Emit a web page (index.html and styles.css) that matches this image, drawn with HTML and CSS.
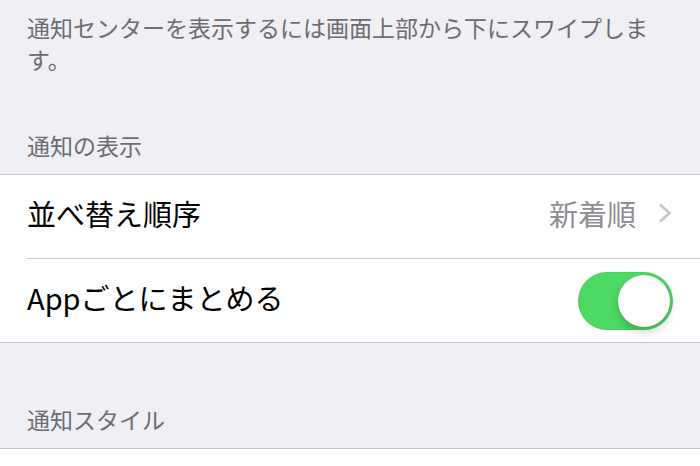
FILE: index.html
```html
<!DOCTYPE html>
<html lang="ja">
<head>
    <meta charset="UTF-8">
    <meta name="viewport" content="width=device-width, initial-scale=1.0">
    <title>通知</title>
    <link rel="stylesheet" href="styles.css">
</head>
<body>

<p class="note">通知センターを表示するには画面上部から下にスワイプします。</p>

<div class="sectionHeader">通知の表示</div>
<div class="group">
    <div class="row">
        <span class="rowLabel">並べ替え順序</span>
        <span class="rowValue">新着順</span>
        <svg class="chevron" width="16" height="20" viewBox="0 0 16 20">
            <path d="M3 1.5 L12.5 10 L3 18.5" fill="none" stroke="#c7c7cc" stroke-width="2.8"/>
        </svg>
    </div>
    <div class="row">
        <span class="rowLabel">Appごとにまとめる</span>
        <div class="toggle on"><div class="knob"></div></div>
    </div>
</div>

<div class="sectionHeader second">通知スタイル</div>
<div class="group">
    <div class="row appRow">
        <div class="appIcon"></div>
    </div>
</div>

</body>
</html>
```

FILE: styles.css
```css
body {
    margin: 0;
    background-color: #efeff4;
    font-family: "Noto Sans CJK JP", "Noto Sans", sans-serif;
}
.note {
    margin: 0;
    padding: 11px 27px 0 27px;
    font-size: 23px;
    line-height: 32px;
    color: #6d6d72;
}
.sectionHeader {
    padding: 0 27px 13px 27px;
    margin-top: 54px;
    font-size: 23px;
    line-height: 32px;
    color: #6d6d72;
}
.sectionHeader.second {
    margin-top: 60px;
}
.group {
    background-color: white;
    border-top: 1px solid #c8c7cc;
    border-bottom: 1px solid #c8c7cc;
}
.row {
    display: flex;
    align-items: center;
    height: 83px;
    margin-left: 27px;
    padding-right: 27px;
    border-bottom: 1px solid #c8c7cc;
}
.row:last-child {
    border-bottom: none;
}
.rowLabel {
    flex: 1;
    font-size: 29px;
    color: black;
    padding-bottom: 8px;
}
.rowValue {
    font-size: 29px;
    color: #8e8e93;
    margin-right: 21px;
    padding-bottom: 8px;
}
.chevron {
    display: block;
    margin-bottom: 8px;
}
.toggle {
    position: relative;
    width: 95px;
    height: 58px;
    border-radius: 29px;
    background-color: #4cd964;
    box-shadow: inset 0 0 0 1px rgba(0, 0, 0, 0.04);
}
.knob {
    position: absolute;
    top: 3px;
    right: 3px;
    width: 52px;
    height: 52px;
    border-radius: 50%;
    background-color: white;
    box-shadow: 0 5px 8px rgba(0, 0, 0, 0.18), 0 0 1px rgba(0, 0, 0, 0.25);
}
.appRow {
    align-items: flex-start;
    padding-top: 17px;
}
.appIcon {
    width: 54px;
    height: 54px;
    border-radius: 12px;
    background-color: #111;
}
```
